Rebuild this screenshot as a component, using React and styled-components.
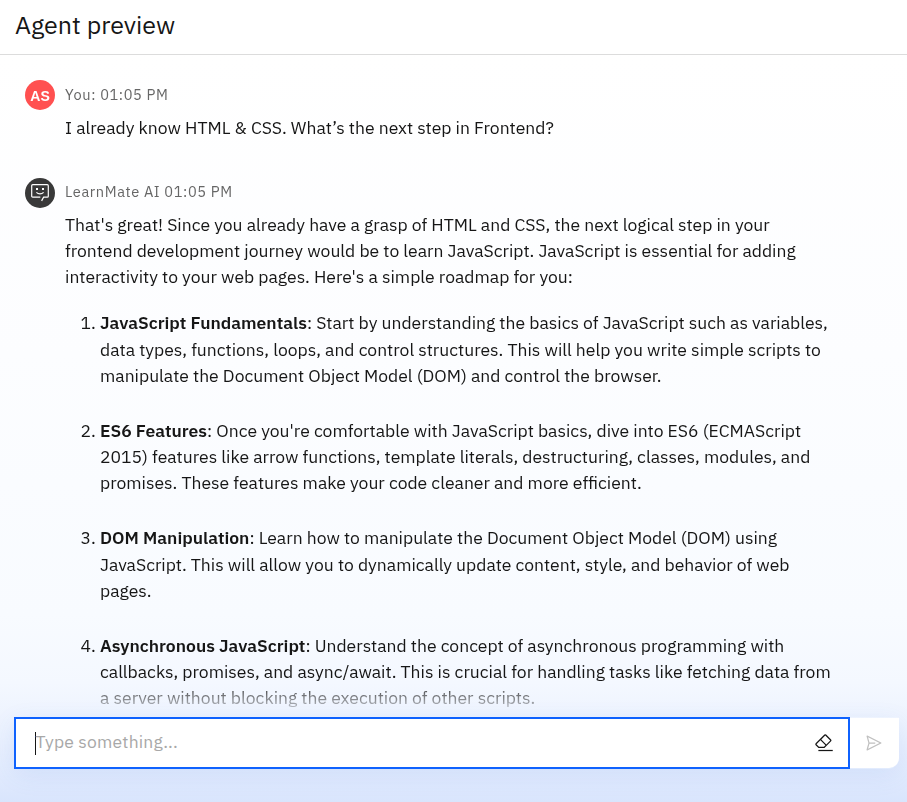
import React from 'react';
import styled, { createGlobalStyle } from 'styled-components';

const Global = createGlobalStyle`
  * { box-sizing: border-box; }
  body { margin: 0; background: #fff; }
`;

const Page = styled.main`
  display: flex;
  flex-direction: column;
  width: 907px;
  height: 802px;
  overflow: hidden;
  color: #161616;
  font-family: "IBM Plex Sans", Roboto, "Noto Sans", sans-serif;
  font-size: 17.52px;
  line-height: 26.28px;
`;

const Header = styled.header`
  flex: none;
  height: 55px;
  padding: 9px 15px 0;
  border-bottom: 1px solid #dcdcdc;
`;

const Title = styled.h1`
  margin: 0;
  font-size: 25px;
  font-weight: 400;
  line-height: 32px;
`;

const Chat = styled.section`
  flex: 1;
  min-height: 0;
  display: flex;
  flex-direction: column;
  background: linear-gradient(180deg, #fff 0%, #fcfdff 40%, #f8fbff 75%, #f4f8ff 84%, #e9f0fe 92%, #d9e5fd 100%);
`;

const Messages = styled.div`
  flex: none;
  height: 662px;
  padding: 25px 25px 0;
  overflow: hidden;
  mask-image: linear-gradient(180deg, #000 0, #000 625px, transparent 662px);
`;

const Message = styled.article`
  display: flex;
  align-items: flex-start;
  gap: 10px;
  height: ${(p) => p.$height || 'auto'};
`;

const Avatar = styled.div`
  flex: none;
  display: flex;
  align-items: center;
  justify-content: center;
  width: 30px;
  height: 30px;
  margin-top: ${(p) => p.$offset || 0};
  border-radius: 50%;
  background: ${(p) => p.$color};
  color: #fff;
  font-family: "Liberation Sans", Arial, sans-serif;
  font-size: 14px;
  font-weight: 700;
  line-height: 30px;
  padding-top: ${(p) => p.$nudge || 0};
`;

const Body = styled.div`
  width: 770px;
`;

const Meta = styled.div`
  height: 34.5px;
  color: #666;
  font-size: 14.6px;
  line-height: 30px;
  letter-spacing: 0.61px;
`;

const Text = styled.p`
  margin: 0;
  white-space: nowrap;
`;

const Steps = styled.ol`
  display: flex;
  flex-direction: column;
  gap: 28.66px;
  margin: 19.9px 0 0;
  padding: 0 0 0 35px;
  white-space: nowrap;
`;

const Step = styled.li`
  padding: 0;
`;

const Term = styled.strong`
  font-weight: 600;
`;

const Composer = styled.form`
  flex: none;
  display: flex;
  height: 52px;
  margin: 0 8px 0 14px;
  border-radius: 0 0 11px 11px;
  box-shadow: 0 6px 24px rgba(69, 118, 220, 0.1);
`;

const Field = styled.div`
  display: flex;
  align-items: center;
  width: 836px;
  padding: 0 14px 0 19px;
  border: 2px solid #0f62fe;
  background: #fff;
`;

const Caret = styled.span`
  flex: none;
  width: 1px;
  height: 23px;
  background: #161616;
`;

const Placeholder = styled.span`
  flex: 1;
  margin-top: -2px;
  color: #a8a8a8;
  letter-spacing: 0.18px;
  text-indent: -0.5px;
`;

const SendButton = styled.button`
  display: flex;
  align-items: center;
  justify-content: center;
  width: 49px;
  height: 50px;
  margin-top: 1px;
  padding: 0 2px 1px 0;
  border: 0;
  border-radius: 0 0 10px 0;
  background: #fff;
  color: #c0c0c0;
`;

const BotIcon = () => (
  <svg width="18" height="18" viewBox="0 0 18 18" fill="none" stroke="#fff" strokeWidth="1.2">
    <path d="M9.3 13.2H1.7a1 1 0 0 1-1-1V1.7a1 1 0 0 1 1-1h14.6a1 1 0 0 1 1 1v10.5a1 1 0 0 1-1 1h-3.7l-2 3.7" />
    <path d="M5.4 8.4c2 1.9 5.2 1.9 7.2 0" />
    <path d="M5 5h2M11 5h2" strokeWidth="1.9" />
  </svg>
);

const EraserIcon = () => (
  <svg width="20" height="20" viewBox="0 0 32 32" fill="#161616">
    <path d="M7 27H30V29H7z" />
    <path d="M27.38 10.51 19.45 2.59a2 2 0 0 0-2.83 0l-14 14a2 2 0 0 0 0 2.83L7.13 24h9.59L27.38 13.34a2 2 0 0 0 0-2.83ZM15.89 22H8l-4-4 6.31-6.31 7.93 7.92Zm3.76-3.76-7.92-7.93L18 4l8 7.93Z" />
  </svg>
);

const SendIcon = () => (
  <svg width="20" height="20" viewBox="0 0 32 32" fill="currentColor">
    <path d="m27.45 15.11-22-11a1 1 0 0 0-1.08.12 1 1 0 0 0-.33 1L7 16 4 26.74A1 1 0 0 0 5 28a1 1 0 0 0 .45-.11l22-11a1 1 0 0 0 0-1.78Zm-20.9 10L8.76 17H18v-2H8.76L6.55 6.89 24.76 16Z" />
  </svg>
);

const steps = [
  ['JavaScript Fundamentals', [
    'Start by understanding the basics of JavaScript such as variables,',
    'data types, functions, loops, and control structures. This will help you write simple scripts to',
    'manipulate the Document Object Model (DOM) and control the browser.',
  ]],
  ['ES6 Features', [
    "Once you're comfortable with JavaScript basics, dive into ES6 (ECMAScript",
    '2015) features like arrow functions, template literals, destructuring, classes, modules, and',
    'promises. These features make your code cleaner and more efficient.',
  ]],
  ['DOM Manipulation', [
    'Learn how to manipulate the Document Object Model (DOM) using',
    'JavaScript. This will allow you to dynamically update content, style, and behavior of web',
    'pages.',
  ]],
  ['Asynchronous JavaScript', [
    'Understand the concept of asynchronous programming with',
    'callbacks, promises, and async/await. This is crucial for handling tasks like fetching data from',
    'a server without blocking the execution of other scripts.',
  ]],
];

const withBreaks = (lines) =>
  lines.map((line, i) => (
    <React.Fragment key={line}>
      {i > 0 && <br />}
      {line}
    </React.Fragment>
  ));

export default function App() {
  return (
    <Page>
      <Global />
      <Header>
        <Title>Agent preview</Title>
      </Header>
      <Chat>
        <Messages>
          <Message $height="97px">
            <Avatar $color="#ff5050" $nudge="2px">AS</Avatar>
            <Body>
              <Meta>You: 01:05 PM</Meta>
              <Text>I already know HTML &amp; CSS. What’s the next step in Frontend?</Text>
            </Body>
          </Message>
          <Message>
            <Avatar $color="#393939" $offset="1px"><BotIcon /></Avatar>
            <Body>
              <Meta>LearnMate AI 01:05 PM</Meta>
              <Text>
                {withBreaks([
                  "That's great! Since you already have a grasp of HTML and CSS, the next logical step in your",
                  'frontend development journey would be to learn JavaScript. JavaScript is essential for adding',
                  "interactivity to your web pages. Here's a simple roadmap for you:",
                ])}
              </Text>
              <Steps>
                {steps.map(([term, lines]) => (
                  <Step key={term}>
                    <Term>{term}</Term>: {withBreaks(lines)}
                  </Step>
                ))}
              </Steps>
            </Body>
          </Message>
        </Messages>
        <Composer>
          <Field>
            <Caret />
            <Placeholder>Type something...</Placeholder>
            <EraserIcon />
          </Field>
          <SendButton type="button" aria-label="Send"><SendIcon /></SendButton>
        </Composer>
      </Chat>
    </Page>
  );
}
